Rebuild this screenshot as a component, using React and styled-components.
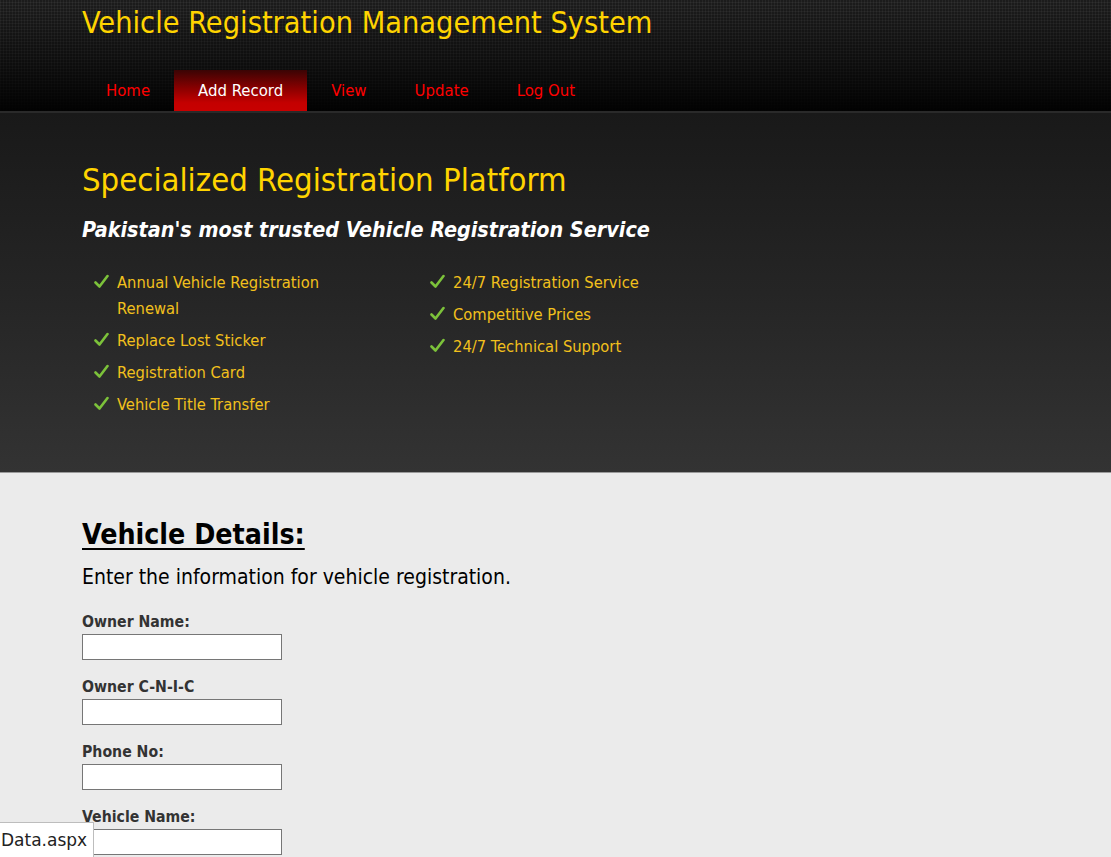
import React from 'react'
import styled, { createGlobalStyle } from 'styled-components'

const GlobalStyle = createGlobalStyle`
  html, body {
    margin: 0;
    padding: 0;
    background: #ebebeb;
    font-family: 'DejaVu Sans Condensed', 'DejaVu Sans', sans-serif;
  }
`

const Header = styled.header`
  height: 111px;
  background-color: #111;
  background-image:
    linear-gradient(to bottom, rgba(20, 20, 20, 0.2) 0%, rgba(0, 0, 0, 0.55) 55%, rgba(0, 0, 0, 0.95) 100%),
    repeating-linear-gradient(0deg, rgba(255, 255, 255, 0.06) 0 1px, transparent 1px 3px),
    repeating-linear-gradient(90deg, rgba(255, 255, 255, 0.06) 0 1px, transparent 1px 3px),
    linear-gradient(#1e1e1e, #1e1e1e);
  border-bottom: 2px solid #2a2a2a;
  display: flex;
  flex-direction: column;
  justify-content: space-between;
`

const Wrap = styled.div`
  padding: 0 82px;
`

const SiteTitle = styled.h1`
  margin: 0;
  padding-top: 4px;
  font-size: 30.4px;
  font-weight: normal;
  color: #ffd400;
  line-height: 38px;
`

const Nav = styled.nav`
  display: flex;
  height: 41px;
`

const NavItem = styled.a`
  display: flex;
  align-items: center;
  padding: 0 24px;
  font-size: 16.6px;
  color: ${p => (p.active ? '#fff' : '#ff0000')};
  text-decoration: none;
  background: ${p => (p.active ? 'linear-gradient(to bottom, #3a0404 0%, #8a0000 45%, #c40000 80%, #c80000 100%)' : 'transparent')};
`

const Hero = styled.section`
  height: 360px;
  background: linear-gradient(to bottom, #191919 0%, #252525 50%, #333 100%);
  border-bottom: 1px solid #9a9a9a;
  padding-top: 47px;
  box-sizing: border-box;
`

const HeroTitle = styled.h2`
  margin: 0;
  font-size: 32.6px;
  font-weight: normal;
  color: #ffd400;
  line-height: 40px;
`

const Tagline = styled.h3`
  margin: 15px 0 0;
  font-size: 21.4px;
  font-weight: bold;
  font-style: italic;
  color: #fff;
  line-height: 30px;
`

const Features = styled.div`
  display: grid;
  grid-template-columns: 336px 260px;
  margin-top: 25px;
  margin-left: 12px;
`

const List = styled.ul`
  list-style: none;
  margin: 0;
  padding: 0;
`

const Item = styled.li`
  display: flex;
  gap: 8px;
  font-size: 16.4px;
  line-height: 26px;
  color: #f2c01c;
  margin-bottom: 6px;
  max-width: 240px;
`

const Check = styled.svg`
  flex: none;
  width: 15px;
  height: 26px;
`

const Main = styled.main`
  padding: 44px 82px 0;
`

const SectionTitle = styled.h2`
  margin: 0;
  font-size: 28.3px;
  font-weight: bold;
  text-decoration: underline;
  text-decoration-thickness: 2px;
  text-underline-offset: 4px;
  color: #000;
  line-height: 36px;
`

const Intro = styled.p`
  margin: 10px 0 0;
  font-size: 21px;
  color: #000;
  line-height: 28px;
`

const Form = styled.form`
  margin-top: 20px;
  display: flex;
  flex-direction: column;
`

const Field = styled.div`
  display: flex;
  flex-direction: column;
  height: 65px;
`

const Label = styled.label`
  font-size: 15.7px;
  font-weight: bold;
  color: #333;
  line-height: 22px;
`

const Input = styled.input`
  width: 200px;
  height: 26px;
  box-sizing: border-box;
  border: 1px solid #767676;
  background: #fff;
  margin: 1px 0 0;
`

const Status = styled.div`
  position: fixed;
  left: 0;
  bottom: 0;
  background: #fff;
  border: 1px solid #bdbdbd;
  border-left: none;
  border-bottom: none;
  padding: 7px 6px 6px 1px;
  font-family: 'DejaVu Sans', sans-serif;
  font-size: 17px;
  line-height: 21px;
  color: #222;
`

const CheckIcon = () => (
  <Check viewBox="0 0 15 26">
    <path d="M1.5 12.5 L5.5 16.5 L13.5 6" stroke="#7cc23a" strokeWidth="2.6" fill="none" strokeLinecap="round" strokeLinejoin="round" />
  </Check>
)

const left = ['Annual Vehicle Registration Renewal', 'Replace Lost Sticker', 'Registration Card', 'Vehicle Title Transfer']
const right = ['24/7 Registration Service', 'Competitive Prices', '24/7 Technical Support']
const nav = ['Home', 'Add Record', 'View', 'Update', 'Log Out']
const fields = ['Owner Name:', 'Owner C-N-I-C', 'Phone No:', 'Vehicle Name:']

export default function App() {
  return (
    <>
      <GlobalStyle />
      <Header>
        <Wrap>
          <SiteTitle>Vehicle Registration Management System</SiteTitle>
        </Wrap>
        <Wrap>
          <Nav>
            {nav.map(n => (
              <NavItem key={n} href="#" active={n === 'Add Record' ? 1 : 0}>{n}</NavItem>
            ))}
          </Nav>
        </Wrap>
      </Header>
      <Hero>
        <Wrap>
          <HeroTitle>Specialized Registration Platform</HeroTitle>
          <Tagline>Pakistan's most trusted Vehicle Registration Service</Tagline>
          <Features>
            <List>
              {left.map(t => (
                <Item key={t}><CheckIcon />{t}</Item>
              ))}
            </List>
            <List>
              {right.map(t => (
                <Item key={t}><CheckIcon />{t}</Item>
              ))}
            </List>
          </Features>
        </Wrap>
      </Hero>
      <Main>
        <SectionTitle>Vehicle Details:</SectionTitle>
        <Intro>Enter the information for vehicle registration.</Intro>
        <Form>
          {fields.map(f => (
            <Field key={f}>
              <Label>{f}</Label>
              <Input type="text" />
            </Field>
          ))}
        </Form>
      </Main>
      <Status>Data.aspx</Status>
    </>
  )
}
